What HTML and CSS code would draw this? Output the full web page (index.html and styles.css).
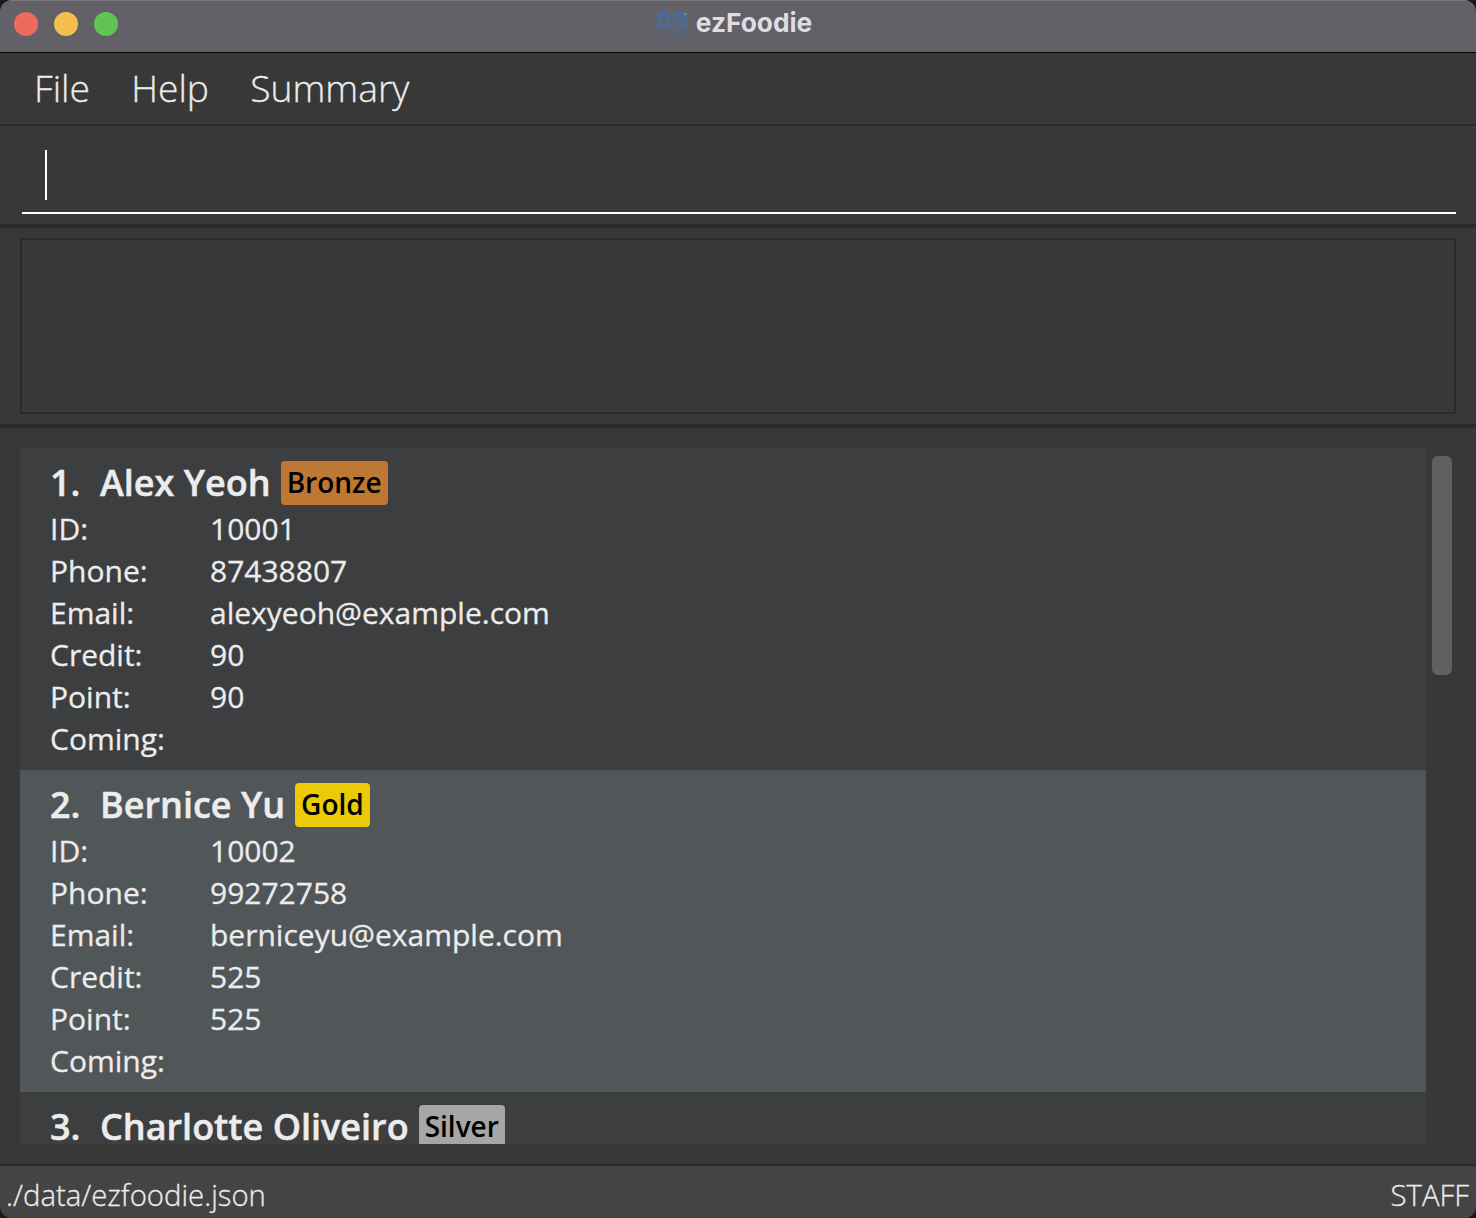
FILE: index.html
```html
<!DOCTYPE html>
<html lang="en">
<head>
<meta charset="utf-8">
<title>ezFoodie</title>
<link rel="stylesheet" href="styles.css">
</head>
<body>
<div class="window">
  <header class="titlebar">
    <div class="lights"><span class="light close"></span><span class="light minimize"></span><span class="light maximize"></span></div>
    <div class="title">
      <svg class="logo" width="34" height="34" viewBox="0 0 34 34">
        <g fill="#50698f">
          <path d="M8 0h1v5H8zM6.500 3h1v2h-1z"/>
          <path fill-rule="evenodd" d="M2.500 5H14v12.500l1.500 1.500v3H12l-1.500-1.500L9 22H2.500L.5 20V7.500zM3 8v1h9V8zM6.500 12L5 13.500v3L6.500 18h2l1.500-1.500v-3L8.500 12z"/>
          <path fill-rule="evenodd" d="M17.500 5H28l4 4v11.500L30.500 22H16l2-2.500V16h-1V6zM19.500 8v1h8V8zM19.500 11.500v1h10v-1zM19.500 15v1h10v-1zM19.500 18.500v1h10v-1z"/>
        </g>
        <path fill="#6fa292" d="M28.500 5l3 3h-3z"/>
        <text class="logo-text" x="2" y="30.500" textLength="29" lengthAdjust="spacingAndGlyphs">EZFOODIE</text>
      </svg>
      <span>ezFoodie</span>
    </div>
  </header>
  <nav class="menu"><span>File</span><span>Help</span><span>Summary</span></nav>
  <section class="command"><div class="field"><span class="caret"></span></div></section>
  <section class="result"><div class="display"></div></section>
  <main class="content">
    <div class="list">
      <article class="card">
        <h2 class="heading"><span class="index">1.</span><span class="name">Alex Yeoh</span><span class="badge bronze">Bronze</span></h2>
        <dl class="details">
          <dt>ID:</dt><dd>10001</dd>
          <dt>Phone:</dt><dd>87438807</dd>
          <dt>Email:</dt><dd>alexyeoh@example.com</dd>
          <dt>Credit:</dt><dd>90</dd>
          <dt>Point:</dt><dd>90</dd>
          <dt>Coming:</dt><dd></dd>
        </dl>
      </article>
      <article class="card even">
        <h2 class="heading"><span class="index">2.</span><span class="name">Bernice Yu</span><span class="badge gold">Gold</span></h2>
        <dl class="details">
          <dt>ID:</dt><dd>10002</dd>
          <dt>Phone:</dt><dd>99272758</dd>
          <dt>Email:</dt><dd>berniceyu@example.com</dd>
          <dt>Credit:</dt><dd>525</dd>
          <dt>Point:</dt><dd>525</dd>
          <dt>Coming:</dt><dd></dd>
        </dl>
      </article>
      <article class="card">
        <h2 class="heading"><span class="index">3.</span><span class="name">Charlotte Oliveiro</span><span class="badge silver">Silver</span></h2>
      </article>
    </div>
    <div class="scrollbar"><div class="thumb"></div></div>
  </main>
  <footer class="status"><span>./data/ezfoodie.json</span><span>STAFF</span></footer>
</div>
</body>
</html>
```
FILE: styles.css
```css
* { box-sizing: border-box; }
body { margin: 0; background: #19191b; }
.window {
  display: flex;
  flex-direction: column;
  width: 1476px;
  height: 1218px;
  overflow: hidden;
  border-radius: 12px;
  background: #383838;
  color: #ececec;
  font-family: "Open Sans", sans-serif;
}
.titlebar {
  display: grid;
  grid-template-columns: 1fr auto 1fr;
  height: 53px;
  flex: none;
  background: #626167;
  border-bottom: 1px solid #000;
  box-shadow: inset 0 1px #77767b;
}
.lights { display: flex; gap: 16px; padding: 12px 14px; }
.light { width: 24px; height: 24px; border-radius: 50%; }
.close { background: #ed6a5e; }
.minimize { background: #f5bf4f; }
.maximize { background: #61c554; }
.title {
  display: flex;
  gap: 6px;
  height: 46px;
  align-items: center;
  padding-right: 8px;
  color: #dedde2;
  font: 700 26.3px/46px Inter, sans-serif;
}
.logo { margin-top: 2px; }
.logo-text { fill: #50698f; font: 700 7px "Liberation Sans", sans-serif; }
.menu {
  display: flex;
  gap: 41.3px;
  height: 73px;
  flex: none;
  padding-left: 34px;
  border-bottom: 2px solid #2a2a2a;
  font-size: 37.2px;
  font-weight: 300;
  line-height: 69px;
  -webkit-text-stroke: .3px;
}
.command { height: 102px; flex: none; padding: 10px 20px 10px 22px; border-bottom: 4px solid #2a2a2a; }
.field { height: 78px; padding: 14px 23px; border-bottom: 2px solid #fff; }
.caret { display: block; width: 2px; height: 50px; background: #fff; }
.result { height: 200px; flex: none; padding: 10px 20px; border-bottom: 4px solid #2a2a2a; }
.display { height: 176px; border: 2px solid #2a2a2a; }
.content { display: flex; height: 736px; flex: none; padding: 20px; }
.list { width: 1406px; flex: none; overflow: hidden; }
.scrollbar { flex: none; padding: 8px 6px; }
.thumb { width: 20px; height: 219px; border-radius: 6px; background: #606060; }
.card { height: 322px; padding: 10px 30px; background: #3c3e3f; }
.even { background: #515658; }
.heading {
  display: flex;
  align-items: center;
  height: 50px;
  margin: 0;
  font-size: 36px;
  font-weight: 600;
  line-height: 50px;
  white-space: nowrap;
  -webkit-text-stroke: .5px;
}
.index { width: 50px; }
.badge {
  height: 44px;
  margin-left: 10px;
  padding: 0 6px;
  border-radius: 4px;
  color: #000;
  font-size: 28px;
  line-height: 43px;
  -webkit-text-stroke: 0;
}
.bronze { background: #bf7834; }
.gold { background: #ebca08; }
.silver { background: #a6a6a6; }
.details {
  display: grid;
  grid-template-columns: 160px 1fr;
  grid-auto-rows: 42px;
  margin: 0;
  font-size: 30px;
  line-height: 42px;
  -webkit-text-stroke: .3px;
}
.details dd { margin: 0; }
.status {
  display: flex;
  justify-content: space-between;
  height: 54px;
  flex: none;
  padding: 4px 7px 0 6px;
  border-top: 2px solid #2a2a2a;
  background: #444;
  font-size: 29.3px;
  font-weight: 300;
  line-height: 51px;
  -webkit-text-stroke: .3px;
}
```
